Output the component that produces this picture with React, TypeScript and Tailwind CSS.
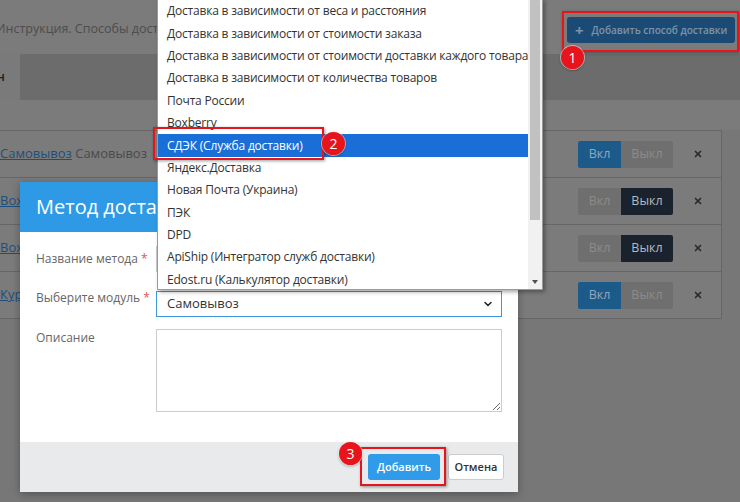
import React from 'react';
import { X, ChevronDown } from 'lucide-react';

const modules = [
  'Доставка в зависимости от веса и расстояния',
  'Доставка в зависимости от стоимости заказа',
  'Доставка в зависимости от стоимости доставки каждого товара',
  'Доставка в зависимости от количества товаров',
  'Почта России',
  'Boxberry',
  'СДЭК (Служба доставки)',
  'Яндекс.Доставка',
  'Новая Почта (Украина)',
  'ПЭК',
  'DPD',
  'ApiShip (Интегратор служб доставки)',
  'Edost.ru (Калькулятор доставки)',
];

const rows = [
  { link: 'Самовывоз', name: 'Самовывоз', on: true },
  { link: 'Boxberry', name: 'Boxberry', on: false },
  { link: 'Boxberry', name: 'Boxberry', on: false },
  { link: 'Курьер', name: 'Курьер', on: true },
];

function Badge({ n }: { n: number }) {
  return (
    <div className="flex h-[23px] w-[23px] items-center justify-center rounded-full bg-[#e8141b] text-[14px] leading-none text-white shadow-[0_0_0_1px_rgba(255,255,255,0.5),0_1px_3px_rgba(0,0,0,0.4)]">
      {n}
    </div>
  );
}

export default function App() {
  return (
    <div className="relative h-[502px] w-[740px] overflow-hidden bg-[#777777] font-['Open_Sans',sans-serif]">
      {/* dimmed page behind the modal */}
      <div className="flex h-[54px] items-start justify-between bg-[#7b7b7b] pr-[5px]">
        <span className="-ml-[4px] mt-[20px] whitespace-nowrap text-[12.5px] text-[#4d4d4d]">
          Инструкция. Способы доставки
        </span>
        <button className="mt-[17px] flex h-[26px] w-[168px] items-center gap-[8px] whitespace-nowrap rounded-[3px] bg-[#1b4b75] px-[8px] text-[10px] font-semibold text-[#7f93a6]">
          <span className="text-[15px] font-bold leading-none">+</span>
          Добавить способ доставки
        </button>
      </div>

      <div className="flex h-[46px]">
        <div className="flex w-[20px] items-center justify-end overflow-hidden bg-[#7a7a7a] pr-[15px]">
          <span className="whitespace-nowrap text-[13px] font-semibold text-[#222]">Основн</span>
        </div>
        <div className="flex-1 bg-[#6c6c6c]" />
      </div>

      <div className="h-[30px] bg-[#7b7b7b]" />

      <div className="w-[722px] border-r border-t border-[#666] bg-[#7b7b7b]">
        {rows.map((r, i) => (
          <div key={i} className="flex h-[47px] items-center border-b border-[#666] pr-[18px]">
            <span className="text-[13px] text-[#4a4a4a]">
              <span className="text-[#1d4f7b] underline">{r.link}</span> {r.name}
            </span>
            <div className="ml-auto flex h-[27px] text-[12.5px]">
              <div
                className={`flex w-[43px] items-center justify-center rounded-l-[2px] ${
                  r.on ? 'bg-[#1c5a8a] text-[#8fa8bf]' : 'bg-[#6f6f6f] text-[#8b8b8b]'
                }`}
              >
                Вкл
              </div>
              <div
                className={`flex w-[52px] items-center justify-center rounded-r-[2px] ${
                  r.on ? 'bg-[#6f6f6f] text-[#8b8b8b]' : 'bg-[#1a232d] text-[#b3bac2]'
                }`}
              >
                Выкл
              </div>
            </div>
            <X className="ml-[20px] h-[10px] w-[10px] text-[#2a2a2a]" strokeWidth={4} />
          </div>
        ))}
      </div>

      {/* modal */}
      <div className="absolute left-[20px] top-[182px] flex w-[498px] flex-col bg-white shadow-[0_2px_8px_rgba(0,0,0,0.3)]">
        <div className="flex h-[50px] items-center bg-[#2e9ae6] px-[16px] text-[20px] text-white">
          Метод доставки
        </div>
        <div className="flex flex-col px-[16px] pb-[30px] pt-[14px] text-[12px] text-[#666]">
          <div className="mb-[19px] flex">
            <div className="mt-[4px] w-[120px]">
              Название метода <span className="text-[#e6534e]">*</span>
            </div>
            <div className="h-[26px] flex-1 border border-[#ccc]" />
          </div>
          <div className="mb-[12px] flex">
            <div className="-mt-[2px] w-[120px]">
              Выберите модуль <span className="text-[#e6534e]">*</span>
            </div>
            <div className="flex h-[26px] flex-1 items-center justify-between border border-[#3d95e0] pl-[10px] pr-[7px] text-[13px] text-[#333]">
              Самовывоз
              <ChevronDown className="h-[12px] w-[12px] text-[#222]" strokeWidth={3} />
            </div>
          </div>
          <div className="flex">
            <div className="w-[120px]">Описание</div>
            <textarea className="h-[83px] flex-1 border border-[#ccc] outline-none" />
          </div>
        </div>
        <div className="flex h-[50px] items-start justify-end gap-[8px] bg-[#e9eaeb] pr-[14px] pt-[12px] text-[11px] font-semibold">
          <button className="h-[26px] w-[72px] rounded-[3px] bg-[#2f9be9] text-white">Добавить</button>
          <button className="h-[26px] w-[56px] rounded-[3px] border border-[#ccc] bg-white text-[#333]">Отмена</button>
        </div>
      </div>

      {/* open select list */}
      <div className="absolute left-[157px] top-[-2px] flex h-[292px] w-[386px] border border-[#9a9a9a] bg-white shadow-[2px_2px_4px_rgba(0,0,0,0.35)]">
        <div className="min-w-0 flex-1 overflow-hidden pt-[1px]">
          {modules.map((m, i) => (
            <div
              key={m}
              className={`flex h-[22.4px] items-center whitespace-nowrap px-[9px] text-[12px] tracking-[-0.2px] ${
                i === 6 ? 'bg-[#1a6ed8] text-white' : 'text-[#333]'
              }`}
            >
              {m}
            </div>
          ))}
        </div>
        <div className="flex w-[14px] shrink-0 flex-col bg-[#f1f1f1] px-[2px]">
          <div className="h-[221px] bg-[#c1c1c1]" />
          <div className="mt-auto flex h-[14px] items-center justify-center">
            <div className="h-0 w-0 border-x-[3px] border-t-[4px] border-x-transparent border-t-[#505050]" />
          </div>
        </div>
      </div>

      {/* annotations */}
      <div className="absolute left-[562px] top-[11px] h-[41px] w-[177px] border-2 border-[#e8141b] shadow-[1px_1px_3px_rgba(0,0,0,0.4)]" />
      <div className="absolute left-[561px] top-[46px]">
        <Badge n={1} />
      </div>

      <div className="absolute left-[153px] top-[127px] h-[33px] w-[171px] border-2 border-[#e8141b] shadow-[1px_1px_3px_rgba(0,0,0,0.4)]" />
      <div className="absolute left-[322px] top-[132px]">
        <Badge n={2} />
      </div>

      <div className="absolute left-[360px] top-[447px] h-[39px] w-[86px] border-2 border-[#e8141b] shadow-[1px_1px_3px_rgba(0,0,0,0.4)]" />
      <div className="absolute left-[339px] top-[442px]">
        <Badge n={3} />
      </div>
    </div>
  );
}
